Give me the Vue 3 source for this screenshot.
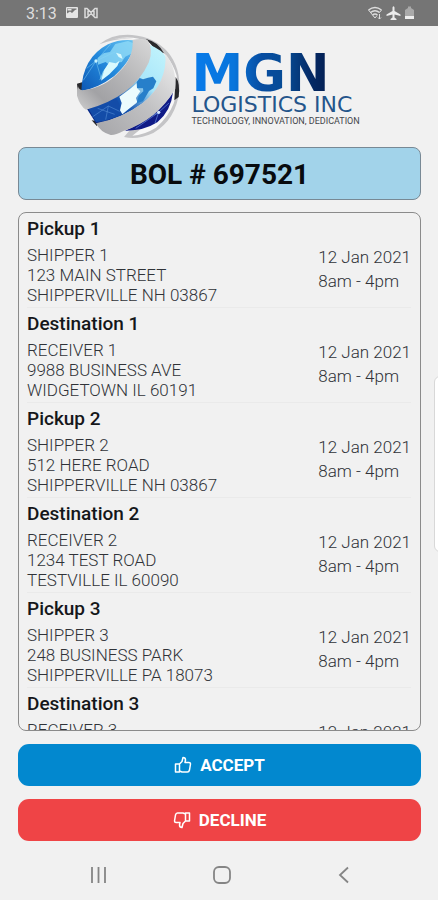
<script setup>
const stops = [
  { title: 'Pickup 1', lines: ['SHIPPER 1', '123 MAIN STREET', 'SHIPPERVILLE NH 03867'] },
  { title: 'Destination 1', lines: ['RECEIVER 1', '9988 BUSINESS AVE', 'WIDGETOWN IL 60191'] },
  { title: 'Pickup 2', lines: ['SHIPPER 2', '512 HERE ROAD', 'SHIPPERVILLE NH 03867'] },
  { title: 'Destination 2', lines: ['RECEIVER 2', '1234 TEST ROAD', 'TESTVILLE IL 60090'] },
  { title: 'Pickup 3', lines: ['SHIPPER 3', '248 BUSINESS PARK', 'SHIPPERVILLE PA 18073'] },
  { title: 'Destination 3', lines: ['RECEIVER 3'] },
]
const date = '12 Jan 2021'
const hours = '8am - 4pm'
</script>

<template>
  <div class="screen">
    <header class="status">
      <span class="time">3:13</span>
      <svg width="14" height="14" viewBox="0 0 14 14">
        <path fill="#e4e4e4" fill-rule="evenodd" d="M2 1h10q1 0 1 1v9q0 1-1 1H2q-1 0-1-1V2q0-1 1-1zm0 1.500v5l3-2 2 1.500 3-3 1.500-.5V2.500z" />
        <path fill="#e4e4e4" d="M2.500 3h4v1.500h-4z" />
      </svg>
      <svg width="16" height="14" viewBox="0 0 16 14" fill="none" stroke="#dcdcdc" stroke-width="1.500">
        <path d="M2 11.500v-9h2l4 4 4-4h2v9h-2l-4-4-4 4zM5 4.500v5M11 4.500v5" />
      </svg>
      <span class="spacer"></span>
      <svg width="17" height="16" viewBox="0 0 17 16" fill="none" stroke="#dedede" stroke-width="1.500">
        <path d="M1.500 5Q8 0 14.500 5M3.500 7.500Q8 4 12.500 7.500M5.500 10Q8 8 10.500 10" />
        <path d="M1.500 5L8 13l2-2.500M14.500 5l-2 2.500M12.500 9v5M11 12.500l1.500 1.500 1.500-1.500" stroke-width="1" />
      </svg>
      <svg width="15" height="16" viewBox="0 0 15 16" fill="#ececec">
        <path d="M6.500 2.500Q7.500 0 8.500 2.500v3.500l6 3.500v1.500l-6-1.500v3l2 1.500v1H4.500v-1l2-1.500v-3l-6 1.500V9.500l6-3.500z" />
      </svg>
      <svg width="13" height="16" viewBox="0 0 13 16">
        <path fill="#a9a9a9" d="M2 5l3-2V1.500h3V3l3 2v9H2z" />
        <path fill="#eeeeee" d="M2 11h9v3H2z" />
      </svg>
    </header>

    <main class="content">
      <div class="logo">
        <svg class="globe" viewBox="40 10 330 330" role="img" aria-label="MGN globe">
          <defs>
            <linearGradient id="bandA" x1="1" y1="0" x2="0" y2="1">
              <stop offset="0" stop-color="#d8d8d8" /><stop offset=".45" stop-color="#b5b5b7" />
              <stop offset=".75" stop-color="#a2a2a5" /><stop offset="1" stop-color="#d0d0d0" />
            </linearGradient>
            <linearGradient id="bandB" x1="1" y1="0" x2="0" y2="1">
              <stop offset="0" stop-color="#eeeeee" /><stop offset=".5" stop-color="#c1c1c3" />
              <stop offset="1" stop-color="#a5a5a8" />
            </linearGradient>
            <linearGradient id="seaA" x1="0" y1="1" x2="1" y2="0">
              <stop offset="0" stop-color="#0d57b4" /><stop offset=".5" stop-color="#2389dc" />
              <stop offset="1" stop-color="#69c4f1" />
            </linearGradient>
            <linearGradient id="seaB" x1="0" y1="1" x2="1" y2="0">
              <stop offset="0" stop-color="#071b78" /><stop offset=".35" stop-color="#1454b0" />
              <stop offset=".62" stop-color="#a9e6fa" /><stop offset="1" stop-color="#c5f5fc" />
            </linearGradient>
          </defs>
          <path fill="#c4c4c6" d="M116 50Q155 18 214 22Q282 28 322 74Q360 120 356 190Q346 276 278 316Q230 338 190 328L210 305L320 220L340 150L300 76L255 38Q190 22 116 50z" />
          <path fill="#f8f8f8" d="M150 36Q215 20 266 44Q330 80 348 144Q360 235 286 300Q250 322 215 324L320 240L336 150L300 76L255 43Q205 25 150 36z" />
          <path fill="#29292c" d="M256 34Q292 42 310 77L288 69zM345 148Q359 166 354 208L341 218zM49 168L64 164L76 184L51 190zM93 278L112 281L109 296z" />
          <path fill="url(#seaA)" d="M62 190Q65 90 142 50Q178 33 218 38Q225 87 161 145Q112 182 62 190z" />
          <path fill="#8ed9f6" opacity=".8" d="M111 91L130 76L148 73L164 49L202 40L217 46L216 76L194 87L183 103L166 106L151 126L126 150L116 158L127 131L144 110L135 103L112 111z" />
          <path fill="#d9f9fd" d="M131 126L146 103L165 107L177 99L170 115L146 140L121 159zM166 75l15 5 5 14-12-6z" />
          <path fill="none" stroke="#8bd5f5" stroke-width="2" opacity=".7" d="M68 158L106 100L165 72M106 100L121 151M78 122L106 100L150 49" />
          <circle cx="106" cy="100" r="5" fill="#c6f3ff" />
          <path fill="url(#seaB)" d="M79 244Q205 205 269 79L267 52Q303 64 320 94Q315 170 247 226Q180 275 107 288z" />
          <path fill="#ecfbfd" d="M176 207Q208 186 232 164L229 181L239 191L226 211L230 224L207 242L185 260L178 248L183 226z" />
          <path fill="#277fca" d="M228 163L237 151L247 155L262 150L277 147L287 161L278 182L265 190L247 221L228 227L234 204L248 191L247 182L229 181z" />
          <path fill="#134ca8" d="M84 244L168 213L176 231L179 262L132 280L106 283z" />
          <path fill="none" stroke="#679fe0" stroke-width="2" opacity=".7" d="M95 268L143 235L177 251M111 242L162 260M143 235L135 276" />
          <path fill="#101b87" d="M337 194Q331 250 290 284Q249 310 193 309Q287 271 337 194z" />
          <path fill="none" stroke="#648ee0" stroke-width="2" d="M225 302L294 254L325 226M294 254L283 286M265 267L294 254" />
          <circle cx="294" cy="254" r="5" fill="#d1e4ff" />
          <path fill="url(#bandA)" d="M216 37Q239 31 261 38Q280 66 264 105Q218 207 76 246Q58 235 49 204Q47 187 52 176Q55 187 66 188Q133 181 177 131Q219 91 216 37z" />
          <path fill="url(#bandB)" d="M314 78Q348 119 344 184Q287 279 188 310Q164 323 150 322Q119 314 106 287Q181 274 246 226Q321 165 314 78z" />
        </svg>
        <div class="wordmark">
          <span class="name">MGN</span>
          <span class="company">LOGISTICS INC</span>
          <span class="tagline">TECHNOLOGY, INNOVATION, DEDICATION</span>
        </div>
      </div>

      <h1 class="bol">BOL # 697521</h1>

      <section class="stops">
        <article v-for="stop in stops" :key="stop.title" class="stop">
          <h2>{{ stop.title }}</h2>
          <div class="detail">
            <div class="address">
              <div v-for="line in stop.lines" :key="line">{{ line }}</div>
            </div>
            <div class="schedule">
              <div>{{ date }}</div>
              <div>{{ hours }}</div>
            </div>
          </div>
        </article>
      </section>

      <button class="action accept" type="button">
        <svg width="18" height="18" viewBox="0 0 18 18" fill="none" stroke="currentColor" stroke-width="1.500" stroke-linejoin="round">
          <path d="M1.500 8h4v8h-4zM5.500 8L8 5.500 9 1.500q2.500 0 2.500 2.500L11 6.500h4q1.500 0 1.500 1.500L15.500 14q-.5 2-2 2H8l-2.500-1" />
        </svg>
        <span>ACCEPT</span>
      </button>
      <button class="action decline" type="button">
        <svg width="18" height="18" viewBox="0 0 18 18" fill="none" stroke="currentColor" stroke-width="1.500" stroke-linejoin="round">
          <path d="M12.500 10h4V2h-4zM12.500 10L10 12.500 9 16.500q-2.500 0-2.500-2.500L7 11.500H3Q1.500 11.500 1.500 10L2.500 4q.5-2 2-2H10l2.500 1" />
        </svg>
        <span>DECLINE</span>
      </button>
    </main>

    <nav class="system">
      <button type="button" aria-label="Recent apps">
        <svg width="20" height="20" viewBox="0 0 20 20" fill="none" stroke="#858585" stroke-width="1.800"><path d="M3 2v16M9.500 2v16M16 2v16" /></svg>
      </button>
      <button type="button" aria-label="Home">
        <svg width="20" height="20" viewBox="0 0 20 20" fill="none" stroke="#858585" stroke-width="1.800"><rect x="2" y="2" width="16" height="16" rx="5" /></svg>
      </button>
      <button type="button" aria-label="Back">
        <svg width="20" height="20" viewBox="0 0 20 20" fill="none" stroke="#858585" stroke-width="1.800"><path d="M14 2.500L6 10l8 7.500" /></svg>
      </button>
    </nav>
    <div class="edge-handle"></div>
  </div>
</template>

<style>
body {
  background: #f1f1f1;
}
</style>

<style scoped>
.screen {
  position: relative;
  display: flex;
  flex-direction: column;
  height: 100vh;
  overflow: hidden;
  background: #f1f1f1;
  color: #15171a;
  font-family: Roboto, "Liberation Sans", sans-serif;
}
.status {
  display: flex;
  align-items: center;
  height: 26px;
  padding: 0 22px 0 26px;
  background: #757575;
  color: #dedede;
}
.time {
  margin-right: 8px;
  font-size: 16px;
}
.status svg + svg {
  margin-left: 4px;
}
.status .spacer {
  flex: 1;
}
.status .spacer ~ svg {
  margin-left: 2px;
}
.content {
  display: flex;
  flex: 1;
  flex-direction: column;
  min-height: 0;
  padding: 5px 17px 0 18px;
}
.logo {
  display: flex;
  justify-content: center;
  gap: 8px;
  height: 110px;
}
.globe {
  width: 110px;
  height: 110px;
}
.wordmark {
  display: flex;
  flex-direction: column;
  width: 174px;
  padding-top: 22px;
  white-space: nowrap;
}
.name {
  background: linear-gradient(90deg, #087bea 0%, #0875dc 24%, #074da1 40%, #064b94 54%, #042a66 68%, #041947 84%);
  background-clip: text;
  color: transparent;
  font-family: "DejaVu Sans", sans-serif;
  font-size: 52px;
  font-weight: 700;
  line-height: 41px;
}
.company {
  color: #24558b;
  font-family: "DejaVu Sans", sans-serif;
  font-size: 22px;
  line-height: 21px;
}
.tagline {
  color: #44474c;
  font-size: 9px;
  line-height: 12px;
}
.bol {
  margin: 6px 0 12px;
  padding-top: 2px;
  border: 1px solid #788995;
  border-radius: 8px;
  background: #a2d3ea;
  color: #080b0e;
  font-size: 28px;
  font-weight: 700;
  line-height: 49px;
  text-align: center;
}
.stops {
  flex: 1;
  min-height: 0;
  overflow: hidden;
  margin-bottom: 13px;
  padding: 0 9px 0 8px;
  border: 1px solid #8b8b8b;
  border-radius: 8px;
}
.stop {
  border-bottom: 1px solid #eaeaea;
}
h2 {
  margin: 0;
  font-size: 19px;
  font-weight: 500;
  line-height: 32px;
}
.detail {
  display: flex;
  justify-content: space-between;
  height: 62px;
  color: #303338;
  font-size: 17px;
  font-weight: 300;
}
.address {
  line-height: 20px;
}
.schedule {
  line-height: 24px;
}
.action {
  display: flex;
  align-items: center;
  justify-content: center;
  gap: 8px;
  flex: none;
  height: 42px;
  margin: 0 0 13px;
  padding: 0;
  border: 0;
  border-radius: 11px;
  color: #ffffff;
  font-family: inherit;
  font-size: 17px;
  font-weight: 700;
}
.accept {
  background: #0288cf;
}
.decline {
  margin-bottom: 9px;
  background: #ef4446;
}
.system {
  display: flex;
  align-items: center;
  justify-content: space-between;
  height: 50px;
  padding: 0 84px 0 89px;
}
.system button {
  display: flex;
  padding: 0;
  border: 0;
  background: none;
}
.edge-handle {
  position: absolute;
  top: 376px;
  right: -10px;
  width: 12px;
  height: 174px;
  border: 1px solid #d8d8d8;
  border-radius: 6px;
  background: #ffffff;
}
</style>
